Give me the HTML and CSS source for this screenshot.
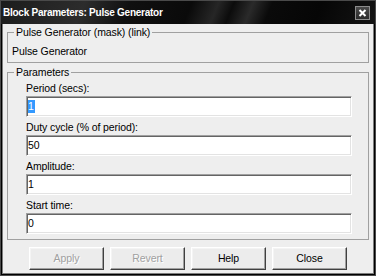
FILE: index.html
```html
<!DOCTYPE html>
<html>
<head>
<meta charset="utf-8">
<link rel="stylesheet" href="styles.css">
</head>
<body>
<div class="window">
  <div class="titlebar">
    <span class="title">Block Parameters: Pulse Generator</span>
    <span class="close-btn">
      <svg width="13" height="12" viewBox="0 0 13 12"><path d="M3.5 3 L9.5 9 M9.5 3 L3.5 9" stroke="#fff" stroke-width="2" fill="none"/></svg>
    </span>
  </div>
  <div class="client">
    <fieldset class="group group-desc">
      <legend>Pulse Generator (mask) (link)</legend>
      <div class="desc">Pulse Generator</div>
    </fieldset>
    <fieldset class="group group-params">
      <legend>Parameters</legend>
      <div class="params">
        <div class="field">
          <div class="label">Period (secs):</div>
          <div class="input"><span class="sel">1</span></div>
        </div>
        <div class="field">
          <div class="label">Duty cycle (% of period):</div>
          <div class="input"><span class="val">50</span></div>
        </div>
        <div class="field">
          <div class="label">Amplitude:</div>
          <div class="input"><span class="val">1</span></div>
        </div>
        <div class="field">
          <div class="label">Start time:</div>
          <div class="input"><span class="val">0</span></div>
        </div>
      </div>
    </fieldset>
    <div class="buttons">
      <div class="btn disabled">Apply</div>
      <div class="btn disabled">Revert</div>
      <div class="btn">Help</div>
      <div class="btn">Close</div>
    </div>
  </div>
</div>
</body>
</html>
```

FILE: styles.css
```css
html, body {
  margin: 0;
  padding: 0;
  background: #000;
}
.window {
  width: 376px;
  height: 276px;
  box-sizing: border-box;
  border: 1px solid #4a4a4a;
  background: #000;
  display: flex;
  flex-direction: column;
  font-family: "Liberation Sans", Arial, sans-serif;
  font-size: 10.5px;
  color: #000;
}
.titlebar {
  height: 23px;
  flex: none;
  display: flex;
  justify-content: space-between;
  align-items: flex-start;
  background: linear-gradient(112deg, #1c1c1c 0%, #252525 12%, #2c2c2c 22%, #101010 34%, #0a0a0a 50%, #262626 57%, #0c0c0c 61%, #2a2a2a 66%, #0a0a0a 71%, #060606 84%, #141414 100%);
}
.title {
  color: #fff;
  font-weight: bold;
  font-size: 10px;
  letter-spacing: -0.25px;
  line-height: 13px;
  margin: 5px 0 0 2px;
}
.close-btn {
  width: 15px;
  height: 14px;
  box-sizing: border-box;
  margin: 5px 5px 0 0;
  border: 1px solid #8c8c8c;
  background: linear-gradient(#4a4a4a, #2a2a2a);
  display: flex;
  align-items: center;
  justify-content: center;
}
.close-btn svg { display: block; }
.client {
  flex: 1;
  margin: 0 1px 1px 1px;
  border: 1px solid #7c7c7c;
  border-top: none;
  background: #eeeeee;
  padding: 2px 4px 0 4px;
  display: flex;
  flex-direction: column;
}
.group {
  margin: 0;
  padding: 0;
  border: 1px solid #a0a0a0;
  min-width: 0;
}
.group legend {
  margin-left: 6px;
  padding: 0 2px;
  line-height: 13px;
  letter-spacing: -0.1px;
}
.desc {
  padding: 6px 4px 4px 4px;
  line-height: 13px;
  letter-spacing: -0.1px;
}
.group-params {
  margin-top: 3px;
}
.params {
  padding: 2px 16px 5px 18px;
  display: flex;
  flex-direction: column;
  gap: 3px;
}
.field {
  display: flex;
  flex-direction: column;
}
.label {
  height: 14px;
  line-height: 14px;
  margin-bottom: 1px;
  letter-spacing: -0.1px;
}
.input {
  height: 21px;
  box-sizing: border-box;
  background: #fff;
  border-top: 1px solid #a0a0a0;
  border-left: 1px solid #a0a0a0;
  border-right: 1px solid #fff;
  border-bottom: 1px solid #fff;
  box-shadow: inset 1px 1px 0 #646464, inset -1px -1px 0 #e3e3e3;
  padding: 1px 1px 1px 1px;
  display: flex;
  align-items: center;
}
.sel {
  background: #3399ff;
  color: #fff;
  line-height: 13px;
  padding: 0 1px 0 0;
}
.val {
  line-height: 13px;
  padding-left: 0;
}
.buttons {
  margin-top: 7px;
  padding-left: 22px;
  display: flex;
  gap: 6px;
}
.btn {
  width: 75px;
  height: 23px;
  box-sizing: border-box;
  border-top: 1px solid #fff;
  border-left: 1px solid #fff;
  border-right: 1px solid #404040;
  border-bottom: 1px solid #404040;
  box-shadow: inset -1px -1px 0 #a0a0a0, inset 1px 1px 0 #f4f4f4;
  background: #ececec;
  text-align: center;
  line-height: 21px;
  letter-spacing: -0.1px;
}
.btn.disabled {
  color: #a0a0a0;
  text-shadow: 1px 1px 0 #fff;
}
```
